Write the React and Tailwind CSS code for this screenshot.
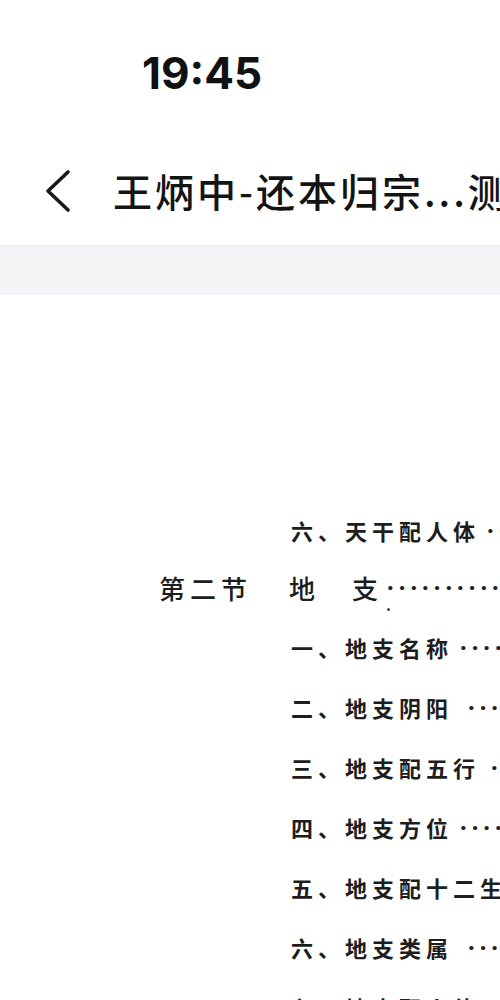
import { useEffect } from 'react';

const cjk = { fontFamily: '"Noto Sans CJK SC", "Noto Sans", sans-serif' };
const dotFont = { fontFamily: '"Liberation Serif", serif' };

// table of contents rows: label, dot leader
const items = [
  { label: '一、地支名称', dots: 8, gap: 'ml-[6px]' },
  { label: '二、地支阴阳', dots: 8, gap: 'ml-[14px]' },
  { label: '三、地支配五行', dots: 4, gap: 'ml-[10px]' },
  { label: '四、地支方位', dots: 8, gap: 'ml-[6px]' },
  { label: '五、地支配十二生肖', dots: 0, gap: '' },
  { label: '六、地支类属', dots: 8, gap: 'ml-[14px]' },
  { label: '七、地支配人体', dots: 4, gap: 'ml-[10px]' },
];

const Leader = ({ count, className }) => (
  <span className={`text-[26px] font-bold tracking-[3px] ${className}`} style={dotFont}>
    {'·'.repeat(count)}
  </span>
);

const SubRow = ({ label, dots, gap }) => (
  <div className="h-[60px] flex items-center pl-[291px] whitespace-nowrap">
    <span className="text-[22px] tracking-[5px] font-bold text-[#1d1d1d]" style={cjk}>
      {label}
    </span>
    {dots > 0 && <Leader count={dots} className={`text-[#222] ${gap}`} />}
  </div>
);

const App = () => {
  useEffect(() => {
    document.body.style.background = '#ffffff';
  }, []);

  return (
    <div className="w-[500px] h-[1000px] overflow-hidden bg-white">
      {/* status bar */}
      <div className="h-[140px] pl-[142px] pt-[47px]">
        <span
          className="text-[44px] leading-[52px] font-bold text-[#111]"
          style={{ fontFamily: 'Inter, "Liberation Sans", sans-serif' }}
        >
          19:45
        </span>
      </div>

      {/* nav bar */}
      <div className="h-[105px] flex items-center pb-[4px] whitespace-nowrap overflow-hidden">
        <svg className="ml-[44px] shrink-0" width="28" height="44" viewBox="0 0 28 44">
          <polyline
            points="24,3 4,22 24,41"
            fill="none"
            stroke="#1a1a1a"
            strokeWidth="3.6"
            strokeLinecap="round"
            strokeLinejoin="round"
          />
        </svg>
        <span
          className="ml-[41px] text-[39px] tracking-[3px] font-medium text-[#141414]"
          style={cjk}
        >
          王炳中-还本归宗...测算
        </span>
      </div>

      {/* gray band */}
      <div className="h-[50px] bg-[#f4f4f6] border-t border-[#ececef]" />

      {/* scanned page */}
      <div className="pt-[207px] overflow-hidden whitespace-nowrap">
        <div className="h-[56px] flex items-center pl-[291px]">
          <span className="text-[22px] tracking-[5px] font-bold text-[#1d1d1d]" style={cjk}>
            六、天干配人体
          </span>
          <Leader count={4} className="text-[#222] ml-[6px]" />
        </div>

        <div className="relative h-[59px] flex items-center pl-[159px]">
          <span className="text-[26px] tracking-[5px] font-medium text-[#1d1d1d]" style={cjk}>
            第二节
          </span>
          <span className="ml-[37px] text-[26px] font-medium text-[#1d1d1d]" style={cjk}>
            地
          </span>
          <span className="ml-[37px] text-[26px] font-medium text-[#1d1d1d]" style={cjk}>
            支
          </span>
          <Leader count={14} className="text-[#222] ml-[8px]" />
          <span className="absolute left-[387px] top-[50px] w-[3px] h-[3px] rounded-full bg-[#444]" />
        </div>

        {items.map((it) => (
          <SubRow key={it.label} {...it} />
        ))}
      </div>
    </div>
  );
};

export default App;
